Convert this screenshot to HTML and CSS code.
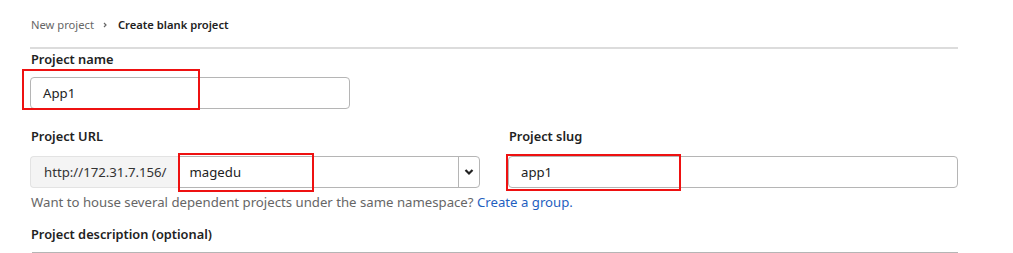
FILE: index.html
```html
<!DOCTYPE html>
<html lang="en">
    <head>
        <meta charset="UTF-8">
        <title>Create blank project</title>
        <link rel="stylesheet" href="styles.css">
    </head>
    <body>
        <div class="page">
            <div class="crumbs">
                <span class="crumb_link">New project</span>
                <svg class="crumb_sep" width="8" height="8" viewBox="0 0 8 8"><path d="M3 2l2 2-2 2" fill="none" stroke="#666" stroke-width="1.2"/></svg>
                <span class="crumb_cur">Create blank project</span>
            </div>

            <div class="field">
                <label class="lbl">Project name</label>
                <div class="input name_input">
                    App1
                    <div class="mark mark_name"></div>
                </div>
            </div>

            <div class="row">
                <div class="col">
                    <label class="lbl">Project URL</label>
                    <div class="url_group">
                        <div class="prefix">http://172.31.7.156/</div>
                        <div class="select">
                            <span class="sel_text">magedu</span>
                            <span class="sel_btn">
                                <svg width="10" height="8" viewBox="0 0 10 8"><path d="M1.5 2l3.5 3.5L8.5 2" fill="none" stroke="#222" stroke-width="2.2"/></svg>
                            </span>
                            <div class="mark mark_ns"></div>
                        </div>
                    </div>
                </div>
                <div class="col">
                    <label class="lbl">Project slug</label>
                    <div class="input">
                        app1
                        <div class="mark mark_slug"></div>
                    </div>
                </div>
            </div>
            <p class="help">Want to house several dependent projects under the same namespace? <a href="#">Create a group.</a></p>

            <div class="field desc">
                <label class="lbl">Project description (optional)</label>
                <div class="textarea"></div>
            </div>
        </div>
    </body>
</html>
```
FILE: styles.css
```css
body{
    margin: 0;
    font-family: "Segoe UI", "Noto Sans", sans-serif;
    color: #2e2e2e;
    background: #fff;
}

.page{
    width: 928px;
    padding-left: 30px;
    height: 253px;
    overflow: hidden;
}

.crumbs{
    display: flex;
    align-items: center;
    height: 49px;
    padding-left: 1px;
    font-size: 11.2px;
    border-bottom: 2px solid #dcdcdc;
    box-sizing: border-box;
    padding-top: 2px;
}

.crumb_link{
    color: #666;
}

.crumb_sep{
    margin: 0 9px 0 7px;
}

.crumb_cur{
    font-weight: 600;
    color: #222;
}

.lbl{
    display: block;
    font-size: 12.8px;
    font-weight: 600;
    color: #222;
    padding-left: 1px;
    line-height: 20px;
}

.field .lbl{
    margin-bottom: 8px;
}

.input{
    position: relative;
    height: 32px;
    border: 1px solid #b5b5b5;
    border-radius: 4px;
    box-sizing: border-box;
    padding-left: 12px;
    font-size: 13.2px;
    line-height: 30px;
    color: #222;
}

.name_input{
    width: 320px;
}

.row{
    display: flex;
    gap: 28px;
    margin-top: 17px;
}

.col{
    flex: 1;
}

.col .lbl{
    margin-bottom: 10px;
}

.url_group{
    display: flex;
    height: 32px;
    font-size: 13.2px;
    line-height: 30px;
}

.prefix{
    background: #f4f4f4;
    border: 1px solid #e3e3e3;
    border-right: none;
    border-radius: 4px 0 0 4px;
    padding: 0 12px 0 13px;
    color: #333;
}

.select{
    position: relative;
    flex: 1;
    display: flex;
    border: 1px solid #b5b5b5;
    border-radius: 0 4px 4px 0;
}

.sel_text{
    flex: 1;
    padding-left: 10px;
    color: #222;
}

.sel_btn{
    width: 20px;
    border-left: 1px solid #b5b5b5;
    display: flex;
    align-items: center;
    justify-content: center;
}

.help{
    margin: 4px 0 0 0;
    padding-left: 1px;
    font-size: 13.2px;
    line-height: 20px;
    color: #666;
}

.help a{
    color: #1f5fbf;
    text-decoration: none;
}

.desc{
    margin-top: 12px;
}

.desc .lbl{
    margin-bottom: 8px;
}

.textarea{
    height: 40px;
    border-top: 1px solid #b5b5b5;
    margin-left: 2px;
}

.mark{
    position: absolute;
    border: 2px solid #ee1111;
    pointer-events: none;
}

.mark_name{
    left: -9px;
    top: -9px;
    width: 174px;
    height: 37px;
}

.mark_ns{
    left: -2px;
    top: -4px;
    width: 132px;
    height: 35px;
}

.mark_slug{
    left: -3px;
    top: -3px;
    width: 171px;
    height: 33px;
}
```
